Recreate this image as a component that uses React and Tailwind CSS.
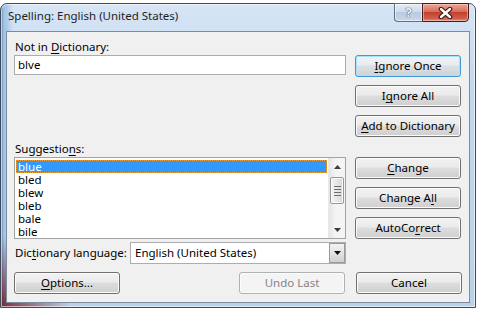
import React from 'react';

const uiFont = "font-['Segoe_UI','Noto_Sans',sans-serif]";

function U({ children }) {
  return <span className="underline underline-offset-[2px]">{children}</span>;
}

function Btn({ children, focused, disabled, className = '' }) {
  let look =
    'border-[#707070] text-black bg-[linear-gradient(to_bottom,#f2f2f2_0%,#ebebeb_45%,#dddddd_50%,#cfcfcf_100%)] shadow-[inset_0_0_0_1px_#fbfbfb]';
  if (focused) {
    look =
      'border-[#3c9ad8] text-black bg-[linear-gradient(to_bottom,#f0f3f6_0%,#e8ecf0_45%,#dbe0e5_50%,#cdd3d8_100%)] shadow-[inset_0_0_0_1px_#a6e3fb]';
  }
  if (disabled) {
    look = 'border-[#adb2b5] text-[#838383] bg-[#f4f4f4] shadow-[inset_0_0_0_1px_#fbfbfb]';
  }
  return (
    <div
      className={`h-[22px] w-[106px] shrink-0 rounded-[3px] border flex items-center justify-center whitespace-nowrap leading-none ${look} ${className}`}
    >
      {children}
    </div>
  );
}

function Arrow({ down }) {
  return (
    <svg width="7" height="4" viewBox="0 0 7 4">
      {down ? <path d="M0 0h7L3.5 4z" fill="#3a3a3a" /> : <path d="M0 4h7L3.5 0z" fill="#3a3a3a" />}
    </svg>
  );
}

function Scrollbar() {
  return (
    <div className="w-[17px] flex flex-col bg-[linear-gradient(to_right,#e5e5e5,#f4f4f4_40%,#f4f4f4)] border-l border-[#e8e8e8]">
      <div className="h-[17px] flex items-center justify-center">
        <Arrow />
      </div>
      <div className="mt-[2px] mx-[1px] h-[27px] rounded-[2px] border border-[#979797] bg-[linear-gradient(to_right,#f5f5f5,#e6e6e6_50%,#d6d6d6)] flex flex-col items-center justify-center gap-[2px] shadow-[inset_0_0_0_1px_#fbfbfb]">
        <div className="w-[7px] h-[1px] bg-[#6e6e6e]" />
        <div className="w-[7px] h-[1px] bg-[#6e6e6e]" />
        <div className="w-[7px] h-[1px] bg-[#6e6e6e]" />
        <div className="w-[7px] h-[1px] bg-[#6e6e6e]" />
      </div>
      <div className="flex-1" />
      <div className="h-[17px] flex items-center justify-center">
        <Arrow down />
      </div>
    </div>
  );
}

export default function App() {
  const suggestions = ['bled', 'blew', 'bleb', 'bale', 'bile'];

  return (
    <div className={`w-[478px] h-[311px] bg-white pt-[3px] text-[11.5px] ${uiFont}`}>
      <div className="w-[476px] h-[305px] rounded-t-[7px] border border-[#3c4a5c] flex flex-col bg-[radial-gradient(circle_at_0%_100%,rgba(110,20,25,0.85),rgba(110,20,25,0)_70px),linear-gradient(to_right,#5b87b8_0px,#a8c6e6_3px,#a8c6e6_5px,rgba(200,220,240,0)_12px),linear-gradient(to_bottom,#d6e5f5,#c2d8ef_30%,#b9d1eb)] shadow-[inset_0_0_0_1px_rgba(255,255,255,0.6)]">
        {/* title bar */}
        <div className="h-[27px] flex items-start shrink-0">
          <div className="pl-[7px] pt-[4px] leading-[16px] text-[#1e1e1e] whitespace-nowrap">
            Spelling: English (United States)
          </div>
          <div className="ml-auto mr-[6px] -mt-px flex">
            <div className="w-[28px] h-[19px] rounded-bl-[4px] border border-[#5d7088] border-r-0 bg-[linear-gradient(to_bottom,#e3ebf5,#cfdcec_45%,#b9cbe2_50%,#c7d7ea)] shadow-[inset_0_0_0_1px_rgba(255,255,255,0.55)] flex items-center justify-center">
              <span className="text-[13px] font-bold leading-none text-[#f4f6fa] [text-shadow:0_0_1px_#2b3a4c,0_0_1px_#2b3a4c]">
                ?
              </span>
            </div>
            <div className="w-[47px] h-[19px] rounded-br-[4px] border border-[#4a1a16] bg-[linear-gradient(to_bottom,#eaa99c,#d96b58_45%,#c2402e_50%,#cf5e4b_85%,#e09080)] shadow-[inset_0_0_0_1px_rgba(255,220,210,0.5)] flex items-center justify-center">
              <svg width="15" height="12" viewBox="0 0 15 12">
                <path d="M3 2l9 8M12 2l-9 8" stroke="#3a1510" strokeWidth="4.5" strokeLinecap="round" />
                <path d="M3 2l9 8M12 2l-9 8" stroke="#ffffff" strokeWidth="2.4" strokeLinecap="round" />
              </svg>
            </div>
          </div>
        </div>

        {/* client area */}
        <div className="mx-[5px] h-[272px] border border-[#7d8b9c] bg-[#f0f0f0] pl-[7px] pr-[7px] pt-[7px] text-black">
          <div className="flex gap-[9px]">
            {/* left column */}
            <div className="w-[332px] flex flex-col">
              <div className="h-[16px] leading-[16px] pl-[1px] whitespace-nowrap">
                Not in <U>D</U>ictionary:
              </div>
              <div className="h-[20px] border border-[#abadb3] bg-white pl-[3px] leading-[18px]">blve</div>
              <div className="mt-[66px] h-[16px] leading-[16px] pl-[1px] whitespace-nowrap">
                Suggestio<U>n</U>s:
              </div>
              <div className="h-[82px] border border-[#a3a3a3] bg-white flex">
                <div className="flex-1 pt-[2px] px-[1px]">
                  <div className="h-[13px] leading-[11px] pl-[1px] bg-[#3399ff] text-white border border-dotted border-[#f0a030]">
                    blue
                  </div>
                  {suggestions.map((s) => (
                    <div key={s} className="h-[13px] leading-[13px] pl-[2px]">
                      {s}
                    </div>
                  ))}
                </div>
                <Scrollbar />
              </div>
              <div className="mt-[3px] flex items-center">
                <div className="pl-[1px] whitespace-nowrap">
                  Dic<U>t</U>ionary language:
                </div>
                <div className="ml-auto w-[216px] h-[22px] border border-[#abadb3] bg-white flex items-center">
                  <div className="flex-1 pl-[4px] whitespace-nowrap">English (United States)</div>
                  <div className="w-[16px] h-[20px] border border-[#9a9a9a] bg-[linear-gradient(to_bottom,#f2f2f2,#e4e4e4_50%,#cfcfcf)] flex items-center justify-center">
                    <svg width="7" height="4" viewBox="0 0 7 4">
                      <path d="M0 0h7L3.5 4z" fill="#111" />
                    </svg>
                  </div>
                </div>
              </div>
            </div>

            {/* right column */}
            <div className="w-[106px] flex flex-col pt-[16px]">
              <Btn focused>
                <span>
                  <U>I</U>gnore Once
                </span>
              </Btn>
              <Btn className="mt-[8px]">
                <span>
                  I<U>g</U>nore All
                </span>
              </Btn>
              <Btn className="mt-[8px]">
                <span>
                  <U>A</U>dd to Dictionary
                </span>
              </Btn>
              <Btn className="mt-[20px]">
                <span>
                  <U>C</U>hange
                </span>
              </Btn>
              <Btn className="mt-[8px]">
                <span>
                  Change A<U>l</U>l
                </span>
              </Btn>
              <Btn className="mt-[8px]">
                <span>
                  AutoCo<U>r</U>rect
                </span>
              </Btn>
            </div>
          </div>

          {/* bottom row */}
          <div className="mt-[8px] flex">
            <Btn>
              <span>
                <U>O</U>ptions...
              </span>
            </Btn>
            <Btn disabled className="ml-auto">
              Undo Last
            </Btn>
            <Btn className="ml-[11px]">Cancel</Btn>
          </div>
        </div>
      </div>
    </div>
  );
}
